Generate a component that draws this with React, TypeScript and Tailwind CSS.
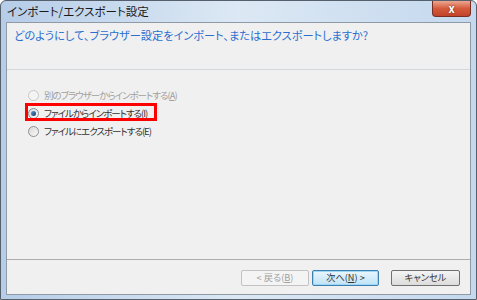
import React from "react"

const jp = "font-['Meiryo_UI','Noto_Sans_CJK_JP',sans-serif] [font-feature-settings:'palt']"

function Radio({ checked = false, disabled = false }: { checked?: boolean; disabled?: boolean }) {
  return (
    <span
      className={
        "flex h-[11px] w-[11px] shrink-0 items-center justify-center rounded-full border " +
        (disabled
          ? "border-[#c8c8c8] bg-[#f4f4f4]"
          : "border-[#8c8f94] bg-gradient-to-br from-[#d8d8d8] to-[#fafafa]")
      }
    >
      {checked && (
        <span className="h-[5px] w-[5px] rounded-full bg-gradient-to-br from-[#5a9ad6] to-[#12406e]" />
      )}
    </span>
  )
}

export default function App() {
  return (
    <div className={"h-[300px] w-[477px] overflow-hidden bg-white " + jp}>
      <div className="flex h-[300px] w-[477px] flex-col rounded-t-[6px] border border-[#55606c] bg-gradient-to-r from-[#b6cde8] via-[#dce8f4] to-[#c4d8ee]">
        {/* title bar */}
        <div className="flex h-[21px] shrink-0 items-start justify-between">
          <span className="pl-[6px] pt-[4px] text-[11.5px] leading-[13px] text-[#1a1a1a]">
            インポート/エクスポート設定
          </span>
          <div className="mr-[5px] flex h-[16px] w-[39px] items-center justify-center rounded-b-[4px] border border-t-0 border-[#7a2e22] bg-gradient-to-b from-[#eaa690] via-[#d45a3c] to-[#c2432a]">
            <span className="text-[11px] font-bold leading-none text-white [text-shadow:0_0_2px_#7a2010]">
              x
            </span>
          </div>
        </div>

        {/* client area */}
        <div className="mx-[5px] flex h-[273px] flex-col border border-[#8f9aa6] bg-[#f0f0f0]">
          <div className="h-[47px] shrink-0 border-b border-[#d3d8dd] pl-[7px] pt-[5px]">
            <p className="text-[11.2px] leading-[14px] text-[#2a6fd0]">
              どのようにして、ブラウザー設定をインポート、またはエクスポートしますか?
            </p>
          </div>

          <div className="flex flex-1 flex-col gap-[6px] pl-[21px] pt-[19px] text-[9.5px] leading-[12px] tracking-[-1px]">
            <div className="flex h-[12px] items-center gap-[5px] text-[#a0a0a0]">
              <Radio disabled />
              <span>
                別のブラウザーからインポートする(<span className="underline">A</span>)
              </span>
            </div>
            <div className="relative flex h-[12px] items-center gap-[5px] text-[#333]">
              <Radio checked />
              <span>
                ファイルからインポートする(<span className="underline">I</span>)
              </span>
              <span className="pointer-events-none absolute left-[-3px] top-[-4px] h-[18px] w-[132px] border-[3px] border-[#ff0000]" />
            </div>
            <div className="flex h-[12px] items-center gap-[5px] text-[#333]">
              <Radio />
              <span>ファイルにエクスポートする(E)</span>
            </div>
          </div>

          <div className="flex h-[35px] shrink-0 items-start justify-end border-t border-[#b0abab] pr-[10px] pt-[10px] text-[9.2px]">
            <div className="flex h-[16px] w-[68px] items-center justify-center rounded-[2px] border border-[#c2c2c2] bg-[#f4f4f4] text-[#a0a0a0]">
              &lt; 戻る(<span className="underline">B</span>)
            </div>
            <div className="ml-[3px] flex h-[16px] w-[67px] items-center justify-center rounded-[2px] border border-[#3c7fb1] bg-gradient-to-b from-[#eaf6fd] to-[#bee3f7] text-[#333] shadow-[inset_0_0_0_1px_#9fd6f5]">
              次へ(<span className="underline">N</span>) &gt;
            </div>
            <div className="ml-[12px] flex h-[16px] w-[69px] items-center justify-center rounded-[2px] border border-[#707070] bg-gradient-to-b from-[#f4f4f4] to-[#dcdcdc] text-[#333]">
              キャンセル
            </div>
          </div>
        </div>
      </div>
    </div>
  )
}
